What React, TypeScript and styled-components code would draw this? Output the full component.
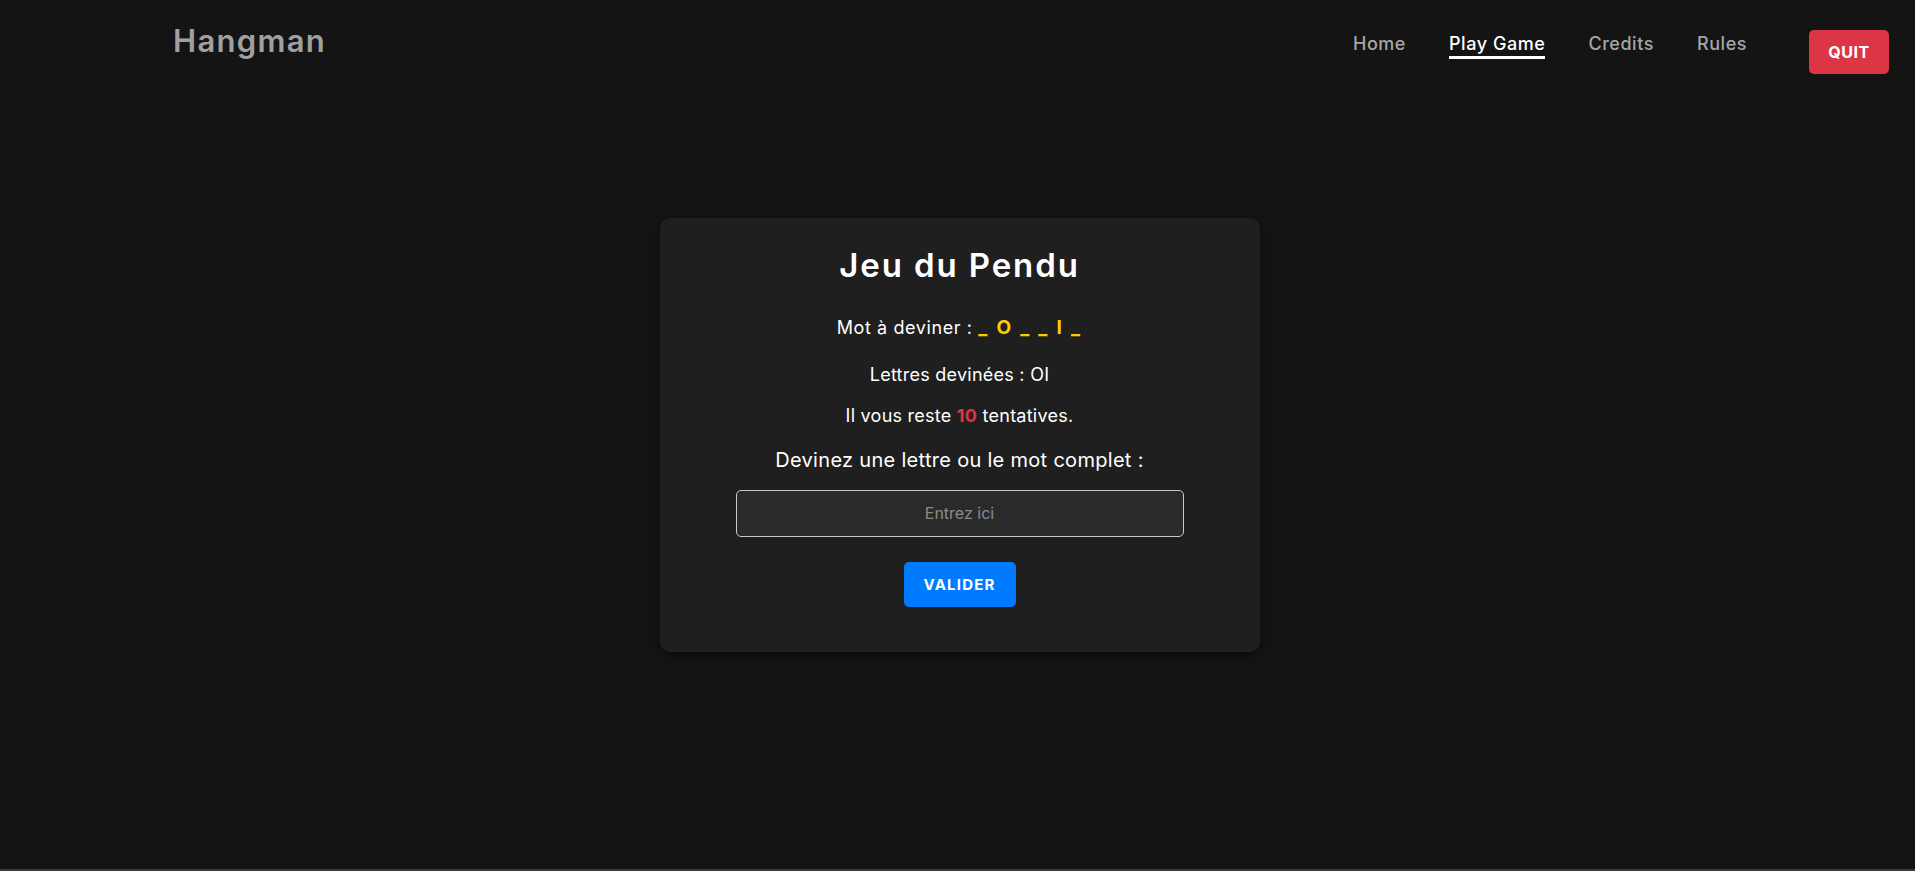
import { useState } from "react";
import styled, { createGlobalStyle } from "styled-components";

const GlobalStyle = createGlobalStyle`
  * {
    box-sizing: border-box;
  }
  body {
    margin: 0;
    background-color: #141414;
    font-family: "Inter", "Open Sans", sans-serif;
    color: #ffffff;
  }
`;

const navItems = ["Home", "Play Game", "Credits", "Rules"];

const App = () => {
  const [guess, setGuess] = useState("");
  const maskedWord = "_ O _ _ I _";
  const guessed = "OI";
  const attemptsLeft = 10;

  return (
    <Page>
      <GlobalStyle />
      <Header>
        <Logo>Hangman</Logo>
        <NavRight>
          <NavList>
            {navItems.map((item) => (
              <NavLink key={item} $active={item === "Play Game"}>
                {item}
              </NavLink>
            ))}
          </NavList>
          <QuitButton>QUIT</QuitButton>
        </NavRight>
      </Header>

      <Main>
        <GameCard>
          <Title>Jeu du Pendu</Title>
          <WordLine>
            Mot à deviner : <MaskedWord>{maskedWord}</MaskedWord>
          </WordLine>
          <InfoLine $gap={19}>Lettres devinées : {guessed}</InfoLine>
          <InfoLine $gap={13}>
            Il vous reste <Attempts>{attemptsLeft}</Attempts> tentatives.
          </InfoLine>
          <Prompt>Devinez une lettre ou le mot complet :</Prompt>
          <GuessInput
            type="text"
            value={guess}
            onChange={(e) => setGuess(e.target.value)}
            placeholder="Entrez ici"
          />
          <SubmitButton>VALIDER</SubmitButton>
        </GameCard>
      </Main>
      <BottomLine />
    </Page>
  );
};

// 전체 페이지
const Page = styled.div`
  display: flex;
  flex-direction: column;
  height: 100vh;
`;

// 상단 네비게이션
const Header = styled.header`
  height: 80px;
  display: flex;
  justify-content: space-between;
  align-items: flex-start;
  padding: 0 26px 0 173px;
`;

const Logo = styled.div`
  margin-top: 21px;
  font-size: 31px;
  line-height: 40px;
  font-weight: 600;
  letter-spacing: 1.3px;
  color: #a0a0a0;
`;

const NavRight = styled.div`
  display: flex;
  align-items: flex-start;
  gap: 62px;
  padding-top: 30px;
`;

const NavList = styled.nav`
  display: flex;
  gap: 43px;
`;

const NavLink = styled.a<{ $active?: boolean }>`
  font-size: 18px;
  line-height: 25px;
  padding-top: 1px;
  font-weight: 500;
  letter-spacing: 0.55px;
  color: ${(p) => (p.$active ? "#ffffff" : "#a6a6a6")};
  border-bottom: 3px solid ${(p) => (p.$active ? "#ffffff" : "transparent")};
  cursor: pointer;
`;

const QuitButton = styled.button`
  width: 80px;
  height: 44px;
  border: none;
  border-radius: 5px;
  background-color: #dc3545;
  color: #ffffff;
  font-family: inherit;
  font-size: 16px;
  font-weight: 700;
  letter-spacing: 0.5px;
  cursor: pointer;
`;

// 가운데 카드 영역
const Main = styled.main`
  flex: 1;
  display: flex;
  align-items: center;
  justify-content: center;
  padding: 0 0 80px 4px;
`;

const GameCard = styled.section`
  width: 600px;
  height: 434px;
  padding: 27px 30px 0;
  background-color: #1f1f1f;
  border-radius: 10px;
  box-shadow: 0 4px 14px rgba(0, 0, 0, 0.45);
  display: flex;
  flex-direction: column;
  align-items: center;
  text-align: center;
`;

const Title = styled.h1`
  margin: 0;
  font-size: 33px;
  line-height: 40px;
  font-weight: 600;
  letter-spacing: 1.9px;
`;

const WordLine = styled.p`
  margin: 29px 0 0;
  font-size: 18px;
  line-height: 28px;
  letter-spacing: 0.6px;
`;

const MaskedWord = styled.span`
  font-size: 19px;
  font-weight: 700;
  letter-spacing: 2.3px;
  color: #ffcc00;
`;

const InfoLine = styled.p<{ $gap: number }>`
  margin: ${(p) => p.$gap}px 0 0;
  font-size: 18px;
  line-height: 28px;
  letter-spacing: 0.25px;
`;

const Attempts = styled.span`
  font-weight: 700;
  color: #dc3545;
`;

const Prompt = styled.p`
  margin: 16px 0 0;
  font-size: 20px;
  line-height: 28px;
  letter-spacing: 0.3px;
`;

const GuessInput = styled.input`
  margin-top: 16px;
  width: 448px;
  height: 47px;
  border: 1px solid #c8c8c8;
  border-radius: 5px;
  background-color: #2a2a2a;
  color: #ffffff;
  font-family: inherit;
  font-size: 16px;
  text-align: center;
  outline: none;

  &::placeholder {
    color: #8a8a8a;
  }
`;

const SubmitButton = styled.button`
  margin-top: 25px;
  width: 112px;
  height: 45px;
  border: none;
  border-radius: 5px;
  background-color: #007bff;
  color: #ffffff;
  font-family: inherit;
  font-size: 15px;
  font-weight: 700;
  letter-spacing: 1.2px;
  cursor: pointer;
`;

const BottomLine = styled.div`
  height: 2px;
  background-color: #3a3a3a;
`;

export default App;
